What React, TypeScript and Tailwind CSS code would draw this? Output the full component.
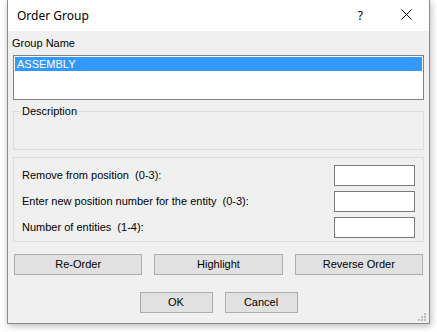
import React from "react";

function Btn({ children, className = "" }: { children: React.ReactNode; className?: string }) {
  return (
    <div
      className={
        "h-[21px] flex items-center justify-center bg-[#e1e1e1] border border-[#adadad] text-[11px] text-black " +
        className
      }
    >
      {children}
    </div>
  );
}

function Field({ label }: { label: string }) {
  return (
    <div className="flex items-center justify-between h-[21px]">
      <span className="whitespace-pre text-[11px] text-black">{label}</span>
      <div className="w-[81px] h-[21px] bg-white border border-[#7a7a7a]" />
    </div>
  );
}

export default function App() {
  return (
    <div className="w-[437px] h-[332px] bg-white overflow-hidden font-['Liberation_Sans',Arial,sans-serif]">
      <div className="relative ml-[7px] w-[423px] h-[324px] border-x border-b border-[#8a8a8a] bg-[#f0f0f0] shadow-[1px_2px_7px_rgba(0,0,0,0.28)] flex flex-col">
        {/* Title bar */}
        <div className="h-[31px] bg-white flex items-center shrink-0">
          <span className="ml-[9px] mt-[1px] text-[12px] text-black font-['Noto_Sans',sans-serif]">Order Group</span>
          <span className="ml-auto mr-[38px] text-[12px] text-black font-['Noto_Sans',sans-serif]">?</span>
          <svg width="11" height="11" viewBox="0 0 11 11" className="mr-[17px] mb-[2px]">
            <path d="M0.5 0.5 L10.5 10.5 M10.5 0.5 L0.5 10.5" stroke="#000" strokeWidth="1" />
          </svg>
        </div>

        {/* Body */}
        <div className="px-[5px] flex flex-col">
          <div className="mt-[6px] h-[13px] leading-[13px] -ml-px text-[11px] text-black">Group Name</div>

          <div className="mt-[5px] h-[45px] bg-white border border-[#828282] p-px">
            <div className="h-[14px] bg-[#3399ff] text-white text-[11px] leading-[14px] pl-[2px]">ASSEMBLY</div>
          </div>

          {/* Description group */}
          <div className="relative mt-[11px] h-[39px] border border-[#dcdcdc]">
            <span className="absolute left-[7px] top-[-7px] bg-[#f0f0f0] px-px text-[11px] leading-[13px] text-black">
              Description
            </span>
          </div>

          {/* Fields group */}
          <div className="mt-[7px] h-[85px] border border-[#dcdcdc] pl-[8px] pr-[8px] pt-[7px] flex flex-col gap-[5px]">
            <Field label="Remove from position  (0-3):" />
            <Field label="Enter new position number for the entity  (0-3):" />
            <Field label="Number of entities  (1-4):" />
          </div>

          {/* Action buttons */}
          <div className="mt-[12px] mx-px flex gap-[12px]">
            <Btn className="flex-1">Re-Order</Btn>
            <Btn className="flex-1">Highlight</Btn>
            <Btn className="flex-1">Reverse Order</Btn>
          </div>

          <div className="mt-[17px] flex justify-center gap-[12px]">
            <Btn className="w-[73px]">OK</Btn>
            <Btn className="w-[73px]">Cancel</Btn>
          </div>
        </div>

        {/* Resize grip */}
        <svg width="9" height="9" viewBox="0 0 9 9" className="absolute right-[2px] bottom-[1px]">
          <rect x="6" y="0" width="2" height="2" fill="#bdbdbd" />
          <rect x="3" y="3" width="2" height="2" fill="#bdbdbd" />
          <rect x="6" y="3" width="2" height="2" fill="#bdbdbd" />
          <rect x="0" y="6" width="2" height="2" fill="#bdbdbd" />
          <rect x="3" y="6" width="2" height="2" fill="#bdbdbd" />
          <rect x="6" y="6" width="2" height="2" fill="#bdbdbd" />
        </svg>
      </div>
    </div>
  );
}
